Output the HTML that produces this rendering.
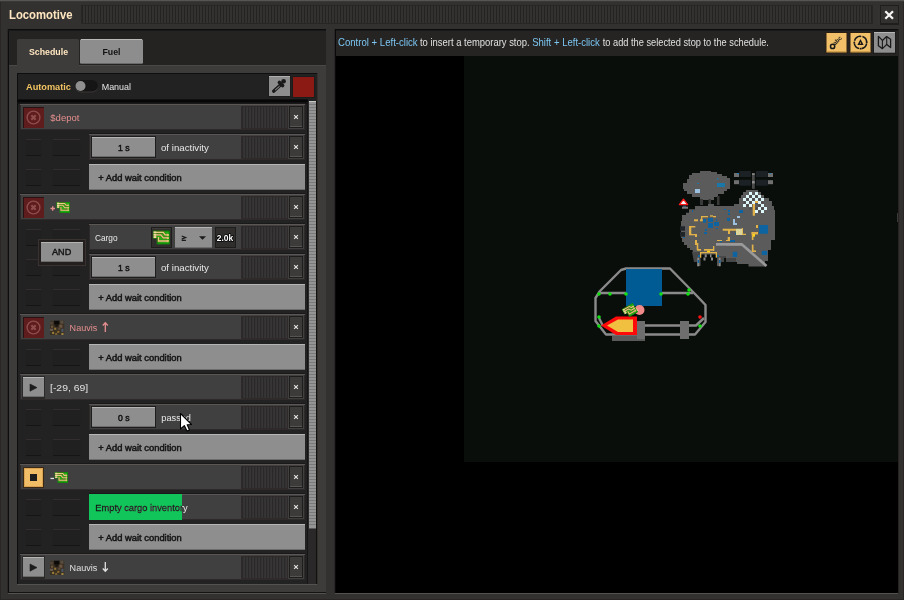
<!DOCTYPE html><html><head><meta charset="utf-8"><style>html,body{margin:0;padding:0;background:#323130;overflow:hidden}svg{display:block;will-change:transform;font-family:"Liberation Sans",sans-serif}</style></head><body>
<svg width="904" height="600" viewBox="0 0 904 600">
<defs>
<symbol id="circ" viewBox="0 0 17 14">
<path d="M0 0H17V14H4V8H0Z" fill="#1fb414"/>
<path d="M1 0.6H16.4V13.4H4.6V7.4H0.6V0.6Z" fill="none" stroke="#0c6e08" stroke-width="0.8"/>
<path d="M1 1.9H10.5L12.2 4.3H15.5 M1 4.3H8L10.5 7.4H15.5 M1 6.6H3.6 M5.7 6.4V10.5H15" fill="none" stroke="#5a6a14" stroke-width="2.3"/>
<path d="M1 1.9H10.5L12.2 4.3H15.5 M1 4.3H8L10.5 7.4H15.5 M1 6.6H3.6 M5.7 6.4V10.5H15" fill="none" stroke="#e6cc86" stroke-width="1.3"/>
<rect x="0.8" y="1" width="2.6" height="1.8" fill="#f0dca0"/><rect x="0.8" y="3.4" width="2.6" height="1.8" fill="#f0dca0"/><rect x="0.8" y="5.7" width="2.6" height="1.8" fill="#f0dca0"/>
<circle cx="15" cy="4.4" r="1.2" fill="#e0c070"/><circle cx="15" cy="7.4" r="1.2" fill="#e0c070"/><circle cx="15" cy="10.5" r="1.2" fill="#e0c070"/>
</symbol>
<symbol id="planet" viewBox="0 0 14 14">
<rect width="14" height="14" fill="#3b3024"/>
<rect x="4" y="0" width="5" height="4" fill="#0c0a08"/><rect x="5" y="4" width="3" height="2" fill="#1a1510"/>
<rect x="0" y="1" width="3" height="3" fill="#4e4236"/><rect x="10" y="0" width="3" height="3" fill="#5a4e42"/>
<rect x="1" y="5" width="2" height="2" fill="#6e5a38"/><rect x="9" y="4" width="3" height="3" fill="#6a5440"/>
<rect x="0" y="8" width="3" height="2" fill="#6a5a50"/><rect x="4" y="7" width="2" height="2" fill="#8a7232"/>
<rect x="11" y="8" width="2" height="3" fill="#48586a"/><rect x="2" y="11" width="2" height="2" fill="#9a7e32"/>
<rect x="7" y="10" width="2" height="2" fill="#8a6a28"/><rect x="11" y="12" width="2" height="2" fill="#a08842"/>
<rect x="5" y="12" width="2" height="2" fill="#7a6030"/><rect x="8" y="7" width="2" height="2" fill="#5a4a38"/>
</symbol>
</defs>
<rect x="0" y="0" width="904" height="600" fill="#323130" />
<rect x="0" y="0" width="1" height="600" fill="#292625" />
<rect x="903" y="0" width="1" height="600" fill="#292625" />
<rect x="0" y="599" width="904" height="1" fill="#292625" />
<rect x="0" y="0" width="904" height="1" fill="#575553" />
<rect x="0" y="1" width="904" height="1" fill="#3a3837" />
<text x="9.00" y="19" font-size="13.5" font-weight="bold" fill="#ffe6c0" textLength="63.52" lengthAdjust="spacingAndGlyphs" >Locomotive</text>
<rect x="81" y="5" width="792" height="19" fill="#282625" />
<rect x="82" y="6" width="790" height="17" fill="#343231" />
<rect x="82" y="6" width="1" height="17" fill="#242322" />
<rect x="85" y="6" width="1" height="17" fill="#242322" />
<rect x="88" y="6" width="1" height="17" fill="#242322" />
<rect x="91" y="6" width="1" height="17" fill="#242322" />
<rect x="94" y="6" width="1" height="17" fill="#242322" />
<rect x="97" y="6" width="1" height="17" fill="#242322" />
<rect x="100" y="6" width="1" height="17" fill="#242322" />
<rect x="103" y="6" width="1" height="17" fill="#242322" />
<rect x="106" y="6" width="1" height="17" fill="#242322" />
<rect x="109" y="6" width="1" height="17" fill="#242322" />
<rect x="112" y="6" width="1" height="17" fill="#242322" />
<rect x="115" y="6" width="1" height="17" fill="#242322" />
<rect x="118" y="6" width="1" height="17" fill="#242322" />
<rect x="121" y="6" width="1" height="17" fill="#242322" />
<rect x="124" y="6" width="1" height="17" fill="#242322" />
<rect x="127" y="6" width="1" height="17" fill="#242322" />
<rect x="130" y="6" width="1" height="17" fill="#242322" />
<rect x="133" y="6" width="1" height="17" fill="#242322" />
<rect x="136" y="6" width="1" height="17" fill="#242322" />
<rect x="139" y="6" width="1" height="17" fill="#242322" />
<rect x="142" y="6" width="1" height="17" fill="#242322" />
<rect x="145" y="6" width="1" height="17" fill="#242322" />
<rect x="148" y="6" width="1" height="17" fill="#242322" />
<rect x="151" y="6" width="1" height="17" fill="#242322" />
<rect x="154" y="6" width="1" height="17" fill="#242322" />
<rect x="157" y="6" width="1" height="17" fill="#242322" />
<rect x="160" y="6" width="1" height="17" fill="#242322" />
<rect x="163" y="6" width="1" height="17" fill="#242322" />
<rect x="166" y="6" width="1" height="17" fill="#242322" />
<rect x="169" y="6" width="1" height="17" fill="#242322" />
<rect x="172" y="6" width="1" height="17" fill="#242322" />
<rect x="175" y="6" width="1" height="17" fill="#242322" />
<rect x="178" y="6" width="1" height="17" fill="#242322" />
<rect x="181" y="6" width="1" height="17" fill="#242322" />
<rect x="184" y="6" width="1" height="17" fill="#242322" />
<rect x="187" y="6" width="1" height="17" fill="#242322" />
<rect x="190" y="6" width="1" height="17" fill="#242322" />
<rect x="193" y="6" width="1" height="17" fill="#242322" />
<rect x="196" y="6" width="1" height="17" fill="#242322" />
<rect x="199" y="6" width="1" height="17" fill="#242322" />
<rect x="202" y="6" width="1" height="17" fill="#242322" />
<rect x="205" y="6" width="1" height="17" fill="#242322" />
<rect x="208" y="6" width="1" height="17" fill="#242322" />
<rect x="211" y="6" width="1" height="17" fill="#242322" />
<rect x="214" y="6" width="1" height="17" fill="#242322" />
<rect x="217" y="6" width="1" height="17" fill="#242322" />
<rect x="220" y="6" width="1" height="17" fill="#242322" />
<rect x="223" y="6" width="1" height="17" fill="#242322" />
<rect x="226" y="6" width="1" height="17" fill="#242322" />
<rect x="229" y="6" width="1" height="17" fill="#242322" />
<rect x="232" y="6" width="1" height="17" fill="#242322" />
<rect x="235" y="6" width="1" height="17" fill="#242322" />
<rect x="238" y="6" width="1" height="17" fill="#242322" />
<rect x="241" y="6" width="1" height="17" fill="#242322" />
<rect x="244" y="6" width="1" height="17" fill="#242322" />
<rect x="247" y="6" width="1" height="17" fill="#242322" />
<rect x="250" y="6" width="1" height="17" fill="#242322" />
<rect x="253" y="6" width="1" height="17" fill="#242322" />
<rect x="256" y="6" width="1" height="17" fill="#242322" />
<rect x="259" y="6" width="1" height="17" fill="#242322" />
<rect x="262" y="6" width="1" height="17" fill="#242322" />
<rect x="265" y="6" width="1" height="17" fill="#242322" />
<rect x="268" y="6" width="1" height="17" fill="#242322" />
<rect x="271" y="6" width="1" height="17" fill="#242322" />
<rect x="274" y="6" width="1" height="17" fill="#242322" />
<rect x="277" y="6" width="1" height="17" fill="#242322" />
<rect x="280" y="6" width="1" height="17" fill="#242322" />
<rect x="283" y="6" width="1" height="17" fill="#242322" />
<rect x="286" y="6" width="1" height="17" fill="#242322" />
<rect x="289" y="6" width="1" height="17" fill="#242322" />
<rect x="292" y="6" width="1" height="17" fill="#242322" />
<rect x="295" y="6" width="1" height="17" fill="#242322" />
<rect x="298" y="6" width="1" height="17" fill="#242322" />
<rect x="301" y="6" width="1" height="17" fill="#242322" />
<rect x="304" y="6" width="1" height="17" fill="#242322" />
<rect x="307" y="6" width="1" height="17" fill="#242322" />
<rect x="310" y="6" width="1" height="17" fill="#242322" />
<rect x="313" y="6" width="1" height="17" fill="#242322" />
<rect x="316" y="6" width="1" height="17" fill="#242322" />
<rect x="319" y="6" width="1" height="17" fill="#242322" />
<rect x="322" y="6" width="1" height="17" fill="#242322" />
<rect x="325" y="6" width="1" height="17" fill="#242322" />
<rect x="328" y="6" width="1" height="17" fill="#242322" />
<rect x="331" y="6" width="1" height="17" fill="#242322" />
<rect x="334" y="6" width="1" height="17" fill="#242322" />
<rect x="337" y="6" width="1" height="17" fill="#242322" />
<rect x="340" y="6" width="1" height="17" fill="#242322" />
<rect x="343" y="6" width="1" height="17" fill="#242322" />
<rect x="346" y="6" width="1" height="17" fill="#242322" />
<rect x="349" y="6" width="1" height="17" fill="#242322" />
<rect x="352" y="6" width="1" height="17" fill="#242322" />
<rect x="355" y="6" width="1" height="17" fill="#242322" />
<rect x="358" y="6" width="1" height="17" fill="#242322" />
<rect x="361" y="6" width="1" height="17" fill="#242322" />
<rect x="364" y="6" width="1" height="17" fill="#242322" />
<rect x="367" y="6" width="1" height="17" fill="#242322" />
<rect x="370" y="6" width="1" height="17" fill="#242322" />
<rect x="373" y="6" width="1" height="17" fill="#242322" />
<rect x="376" y="6" width="1" height="17" fill="#242322" />
<rect x="379" y="6" width="1" height="17" fill="#242322" />
<rect x="382" y="6" width="1" height="17" fill="#242322" />
<rect x="385" y="6" width="1" height="17" fill="#242322" />
<rect x="388" y="6" width="1" height="17" fill="#242322" />
<rect x="391" y="6" width="1" height="17" fill="#242322" />
<rect x="394" y="6" width="1" height="17" fill="#242322" />
<rect x="397" y="6" width="1" height="17" fill="#242322" />
<rect x="400" y="6" width="1" height="17" fill="#242322" />
<rect x="403" y="6" width="1" height="17" fill="#242322" />
<rect x="406" y="6" width="1" height="17" fill="#242322" />
<rect x="409" y="6" width="1" height="17" fill="#242322" />
<rect x="412" y="6" width="1" height="17" fill="#242322" />
<rect x="415" y="6" width="1" height="17" fill="#242322" />
<rect x="418" y="6" width="1" height="17" fill="#242322" />
<rect x="421" y="6" width="1" height="17" fill="#242322" />
<rect x="424" y="6" width="1" height="17" fill="#242322" />
<rect x="427" y="6" width="1" height="17" fill="#242322" />
<rect x="430" y="6" width="1" height="17" fill="#242322" />
<rect x="433" y="6" width="1" height="17" fill="#242322" />
<rect x="436" y="6" width="1" height="17" fill="#242322" />
<rect x="439" y="6" width="1" height="17" fill="#242322" />
<rect x="442" y="6" width="1" height="17" fill="#242322" />
<rect x="445" y="6" width="1" height="17" fill="#242322" />
<rect x="448" y="6" width="1" height="17" fill="#242322" />
<rect x="451" y="6" width="1" height="17" fill="#242322" />
<rect x="454" y="6" width="1" height="17" fill="#242322" />
<rect x="457" y="6" width="1" height="17" fill="#242322" />
<rect x="460" y="6" width="1" height="17" fill="#242322" />
<rect x="463" y="6" width="1" height="17" fill="#242322" />
<rect x="466" y="6" width="1" height="17" fill="#242322" />
<rect x="469" y="6" width="1" height="17" fill="#242322" />
<rect x="472" y="6" width="1" height="17" fill="#242322" />
<rect x="475" y="6" width="1" height="17" fill="#242322" />
<rect x="478" y="6" width="1" height="17" fill="#242322" />
<rect x="481" y="6" width="1" height="17" fill="#242322" />
<rect x="484" y="6" width="1" height="17" fill="#242322" />
<rect x="487" y="6" width="1" height="17" fill="#242322" />
<rect x="490" y="6" width="1" height="17" fill="#242322" />
<rect x="493" y="6" width="1" height="17" fill="#242322" />
<rect x="496" y="6" width="1" height="17" fill="#242322" />
<rect x="499" y="6" width="1" height="17" fill="#242322" />
<rect x="502" y="6" width="1" height="17" fill="#242322" />
<rect x="505" y="6" width="1" height="17" fill="#242322" />
<rect x="508" y="6" width="1" height="17" fill="#242322" />
<rect x="511" y="6" width="1" height="17" fill="#242322" />
<rect x="514" y="6" width="1" height="17" fill="#242322" />
<rect x="517" y="6" width="1" height="17" fill="#242322" />
<rect x="520" y="6" width="1" height="17" fill="#242322" />
<rect x="523" y="6" width="1" height="17" fill="#242322" />
<rect x="526" y="6" width="1" height="17" fill="#242322" />
<rect x="529" y="6" width="1" height="17" fill="#242322" />
<rect x="532" y="6" width="1" height="17" fill="#242322" />
<rect x="535" y="6" width="1" height="17" fill="#242322" />
<rect x="538" y="6" width="1" height="17" fill="#242322" />
<rect x="541" y="6" width="1" height="17" fill="#242322" />
<rect x="544" y="6" width="1" height="17" fill="#242322" />
<rect x="547" y="6" width="1" height="17" fill="#242322" />
<rect x="550" y="6" width="1" height="17" fill="#242322" />
<rect x="553" y="6" width="1" height="17" fill="#242322" />
<rect x="556" y="6" width="1" height="17" fill="#242322" />
<rect x="559" y="6" width="1" height="17" fill="#242322" />
<rect x="562" y="6" width="1" height="17" fill="#242322" />
<rect x="565" y="6" width="1" height="17" fill="#242322" />
<rect x="568" y="6" width="1" height="17" fill="#242322" />
<rect x="571" y="6" width="1" height="17" fill="#242322" />
<rect x="574" y="6" width="1" height="17" fill="#242322" />
<rect x="577" y="6" width="1" height="17" fill="#242322" />
<rect x="580" y="6" width="1" height="17" fill="#242322" />
<rect x="583" y="6" width="1" height="17" fill="#242322" />
<rect x="586" y="6" width="1" height="17" fill="#242322" />
<rect x="589" y="6" width="1" height="17" fill="#242322" />
<rect x="592" y="6" width="1" height="17" fill="#242322" />
<rect x="595" y="6" width="1" height="17" fill="#242322" />
<rect x="598" y="6" width="1" height="17" fill="#242322" />
<rect x="601" y="6" width="1" height="17" fill="#242322" />
<rect x="604" y="6" width="1" height="17" fill="#242322" />
<rect x="607" y="6" width="1" height="17" fill="#242322" />
<rect x="610" y="6" width="1" height="17" fill="#242322" />
<rect x="613" y="6" width="1" height="17" fill="#242322" />
<rect x="616" y="6" width="1" height="17" fill="#242322" />
<rect x="619" y="6" width="1" height="17" fill="#242322" />
<rect x="622" y="6" width="1" height="17" fill="#242322" />
<rect x="625" y="6" width="1" height="17" fill="#242322" />
<rect x="628" y="6" width="1" height="17" fill="#242322" />
<rect x="631" y="6" width="1" height="17" fill="#242322" />
<rect x="634" y="6" width="1" height="17" fill="#242322" />
<rect x="637" y="6" width="1" height="17" fill="#242322" />
<rect x="640" y="6" width="1" height="17" fill="#242322" />
<rect x="643" y="6" width="1" height="17" fill="#242322" />
<rect x="646" y="6" width="1" height="17" fill="#242322" />
<rect x="649" y="6" width="1" height="17" fill="#242322" />
<rect x="652" y="6" width="1" height="17" fill="#242322" />
<rect x="655" y="6" width="1" height="17" fill="#242322" />
<rect x="658" y="6" width="1" height="17" fill="#242322" />
<rect x="661" y="6" width="1" height="17" fill="#242322" />
<rect x="664" y="6" width="1" height="17" fill="#242322" />
<rect x="667" y="6" width="1" height="17" fill="#242322" />
<rect x="670" y="6" width="1" height="17" fill="#242322" />
<rect x="673" y="6" width="1" height="17" fill="#242322" />
<rect x="676" y="6" width="1" height="17" fill="#242322" />
<rect x="679" y="6" width="1" height="17" fill="#242322" />
<rect x="682" y="6" width="1" height="17" fill="#242322" />
<rect x="685" y="6" width="1" height="17" fill="#242322" />
<rect x="688" y="6" width="1" height="17" fill="#242322" />
<rect x="691" y="6" width="1" height="17" fill="#242322" />
<rect x="694" y="6" width="1" height="17" fill="#242322" />
<rect x="697" y="6" width="1" height="17" fill="#242322" />
<rect x="700" y="6" width="1" height="17" fill="#242322" />
<rect x="703" y="6" width="1" height="17" fill="#242322" />
<rect x="706" y="6" width="1" height="17" fill="#242322" />
<rect x="709" y="6" width="1" height="17" fill="#242322" />
<rect x="712" y="6" width="1" height="17" fill="#242322" />
<rect x="715" y="6" width="1" height="17" fill="#242322" />
<rect x="718" y="6" width="1" height="17" fill="#242322" />
<rect x="721" y="6" width="1" height="17" fill="#242322" />
<rect x="724" y="6" width="1" height="17" fill="#242322" />
<rect x="727" y="6" width="1" height="17" fill="#242322" />
<rect x="730" y="6" width="1" height="17" fill="#242322" />
<rect x="733" y="6" width="1" height="17" fill="#242322" />
<rect x="736" y="6" width="1" height="17" fill="#242322" />
<rect x="739" y="6" width="1" height="17" fill="#242322" />
<rect x="742" y="6" width="1" height="17" fill="#242322" />
<rect x="745" y="6" width="1" height="17" fill="#242322" />
<rect x="748" y="6" width="1" height="17" fill="#242322" />
<rect x="751" y="6" width="1" height="17" fill="#242322" />
<rect x="754" y="6" width="1" height="17" fill="#242322" />
<rect x="757" y="6" width="1" height="17" fill="#242322" />
<rect x="760" y="6" width="1" height="17" fill="#242322" />
<rect x="763" y="6" width="1" height="17" fill="#242322" />
<rect x="766" y="6" width="1" height="17" fill="#242322" />
<rect x="769" y="6" width="1" height="17" fill="#242322" />
<rect x="772" y="6" width="1" height="17" fill="#242322" />
<rect x="775" y="6" width="1" height="17" fill="#242322" />
<rect x="778" y="6" width="1" height="17" fill="#242322" />
<rect x="781" y="6" width="1" height="17" fill="#242322" />
<rect x="784" y="6" width="1" height="17" fill="#242322" />
<rect x="787" y="6" width="1" height="17" fill="#242322" />
<rect x="790" y="6" width="1" height="17" fill="#242322" />
<rect x="793" y="6" width="1" height="17" fill="#242322" />
<rect x="796" y="6" width="1" height="17" fill="#242322" />
<rect x="799" y="6" width="1" height="17" fill="#242322" />
<rect x="802" y="6" width="1" height="17" fill="#242322" />
<rect x="805" y="6" width="1" height="17" fill="#242322" />
<rect x="808" y="6" width="1" height="17" fill="#242322" />
<rect x="811" y="6" width="1" height="17" fill="#242322" />
<rect x="814" y="6" width="1" height="17" fill="#242322" />
<rect x="817" y="6" width="1" height="17" fill="#242322" />
<rect x="820" y="6" width="1" height="17" fill="#242322" />
<rect x="823" y="6" width="1" height="17" fill="#242322" />
<rect x="826" y="6" width="1" height="17" fill="#242322" />
<rect x="829" y="6" width="1" height="17" fill="#242322" />
<rect x="832" y="6" width="1" height="17" fill="#242322" />
<rect x="835" y="6" width="1" height="17" fill="#242322" />
<rect x="838" y="6" width="1" height="17" fill="#242322" />
<rect x="841" y="6" width="1" height="17" fill="#242322" />
<rect x="844" y="6" width="1" height="17" fill="#242322" />
<rect x="847" y="6" width="1" height="17" fill="#242322" />
<rect x="850" y="6" width="1" height="17" fill="#242322" />
<rect x="853" y="6" width="1" height="17" fill="#242322" />
<rect x="856" y="6" width="1" height="17" fill="#242322" />
<rect x="859" y="6" width="1" height="17" fill="#242322" />
<rect x="862" y="6" width="1" height="17" fill="#242322" />
<rect x="865" y="6" width="1" height="17" fill="#242322" />
<rect x="868" y="6" width="1" height="17" fill="#242322" />
<rect x="871" y="6" width="1" height="17" fill="#242322" />
<rect x="880" y="5" width="19" height="20" fill="#1f1e1d" />
<rect x="881" y="6" width="17" height="17" fill="#33312f" />
<path d="M885.3 11.2 L893 18.8 M893 11.2 L885.3 18.8" stroke="#f4f4f4" stroke-width="2.3" stroke-linecap="butt"/>
<rect x="8" y="29" width="318" height="564" fill="#0e0d0d" />
<rect x="7" y="29" width="1" height="564" fill="#2a2625" />
<rect x="9" y="29" width="317" height="36" fill="#242322" />
<rect x="8" y="29" width="318" height="1" fill="#0d0c0c" />
<rect x="8" y="30" width="318" height="1" fill="#1a1919" />
<rect x="17" y="39" width="62" height="27" fill="#3d3c3b"  rx="1.5"/>
<rect x="17" y="45" width="62" height="21" fill="#3d3c3b" />
<text x="29.00" y="55" font-size="9" font-weight="bold" fill="#ffe6c0" textLength="39.01" lengthAdjust="spacingAndGlyphs" >Schedule</text>
<rect x="80" y="39" width="63" height="25" fill="#6a6a6a"  rx="1.5"/>
<rect x="80" y="40" width="63" height="23" fill="#8d8d8d" />
<rect x="81" y="39" width="61" height="1" fill="#b9b9b9" />
<text x="102.50" y="55" font-size="9" font-weight="bold" fill="#111111" textLength="18.01" lengthAdjust="spacingAndGlyphs" >Fuel</text>
<rect x="9" y="65" width="317" height="527" fill="#3d3c3b" />
<rect x="9" y="65" width="8" height="1" fill="#4a4847" />
<rect x="79" y="65" width="247" height="1" fill="#4a4847" />
<rect x="17" y="73" width="300" height="511" fill="#232222" />
<rect x="17" y="73" width="300" height="1" fill="#0e0e0e" />
<rect x="17" y="73" width="1" height="511" fill="#0e0e0e" />
<rect x="17" y="584" width="300" height="1" fill="#55514f" />
<rect x="9" y="592" width="317" height="1" fill="#141313" />
<rect x="8" y="593" width="318" height="1" fill="#55514f" />
<rect x="317" y="73" width="1" height="511" fill="#36302d" />
<text x="26.00" y="90" font-size="9" font-weight="bold" fill="#f2c462" textLength="44.99" lengthAdjust="spacingAndGlyphs" >Automatic</text>
<rect x="75" y="80.5" width="23" height="12" fill="#3a3837"  rx="6"/>
<rect x="75" y="80" width="23" height="11.5" fill="#161515"  rx="6"/>
<circle cx="80.5" cy="86" r="5" fill="#8f8f8f"/>
<text x="101.70" y="90" font-size="9.6" font-weight="normal" fill="#e6e6e6" textLength="29.30" lengthAdjust="spacingAndGlyphs" >Manual</text>
<rect x="268" y="75" width="23" height="22" fill="#1d1c1c" />
<rect x="269" y="76" width="21" height="20" fill="#8d8d8d" />
<rect x="269" y="76" width="21" height="1" fill="#b0b0b0" />
<path d="M281 84.5L273.6 91.2" stroke="#1a1a1a" stroke-width="3.2" stroke-linecap="round"/><path d="M279.6 86.2L275.2 90" stroke="#a0a0a0" stroke-width="1"/><path d="M279.4 82.4L282.6 85.6" stroke="#1a1a1a" stroke-width="3.6" stroke-linecap="round"/><circle cx="283.6" cy="81.3" r="2.3" fill="#1a1a1a"/>
<rect x="292" y="76" width="23" height="22" fill="#1d1c1c" />
<rect x="293" y="77" width="21" height="20" fill="#8b1a14" />
<rect x="17" y="99" width="291" height="5" fill="#121111" />
<rect x="17" y="100" width="291" height="2" fill="#070707" />
<rect x="20" y="103" width="285" height="1" fill="#1a1919" />
<rect x="20" y="104" width="285" height="26" fill="#2e2a29" />
<rect x="21" y="105" width="283" height="24" fill="#414040" />
<rect x="20" y="104" width="285" height="1" fill="#5b5654" />
<rect x="241" y="106" width="47" height="23" fill="#2f2a29" />
<rect x="242" y="107" width="45" height="21" fill="#2a2828" />
<rect x="243.5" y="107" width="1.2" height="21" fill="#3e3c3c" />
<rect x="246.5" y="107" width="1.2" height="21" fill="#3e3c3c" />
<rect x="249.5" y="107" width="1.2" height="21" fill="#3e3c3c" />
<rect x="252.5" y="107" width="1.2" height="21" fill="#3e3c3c" />
<rect x="255.5" y="107" width="1.2" height="21" fill="#3e3c3c" />
<rect x="258.5" y="107" width="1.2" height="21" fill="#3e3c3c" />
<rect x="261.5" y="107" width="1.2" height="21" fill="#3e3c3c" />
<rect x="264.5" y="107" width="1.2" height="21" fill="#3e3c3c" />
<rect x="267.5" y="107" width="1.2" height="21" fill="#3e3c3c" />
<rect x="270.5" y="107" width="1.2" height="21" fill="#3e3c3c" />
<rect x="273.5" y="107" width="1.2" height="21" fill="#3e3c3c" />
<rect x="276.5" y="107" width="1.2" height="21" fill="#3e3c3c" />
<rect x="279.5" y="107" width="1.2" height="21" fill="#3e3c3c" />
<rect x="282.5" y="107" width="1.2" height="21" fill="#3e3c3c" />
<rect x="285.5" y="107" width="1.2" height="21" fill="#3e3c3c" />
<rect x="289" y="106" width="14" height="22" fill="#1e1d1c" />
<rect x="290" y="107" width="12" height="20" fill="#3c3b3a" />
<rect x="290" y="126" width="12" height="1" fill="#575553" />
<path d="M294.1 115.1 L297.9 118.9 M297.9 115.1 L294.1 118.9" stroke="#e0e0e0" stroke-width="1.15"/>
<rect x="23" y="107" width="21" height="21" fill="#2a1212" />
<rect x="24" y="108" width="20" height="20" fill="#5e1c1c" />
<circle cx="33.5" cy="117.5" r="6.4" fill="none" stroke="#8e4c4a" stroke-width="1.4"/>
<path d="M31.3 115.3 L35.7 119.7 M35.7 115.3 L31.3 119.7" stroke="#8e4c4a" stroke-width="2.2"/>
<text x="50.30" y="121" font-size="9.6" font-weight="normal" fill="#e58e8e" textLength="29.19" lengthAdjust="spacingAndGlyphs" >$depot</text>
<rect x="25.5" y="139" width="16.0" height="17" fill="#212020" />
<rect x="26.0" y="139" width="15.0" height="1" fill="#322e2d" />
<rect x="26.0" y="155" width="15.0" height="1" fill="#161515" />
<rect x="52.5" y="139" width="28.0" height="17" fill="#212020" />
<rect x="53.0" y="139" width="27.0" height="1" fill="#322e2d" />
<rect x="53.0" y="155" width="27.0" height="1" fill="#161515" />
<rect x="89" y="133" width="216" height="1" fill="#1a1919" />
<rect x="89" y="134" width="216" height="26" fill="#2e2a29" />
<rect x="90" y="135" width="214" height="24" fill="#414040" />
<rect x="89" y="134" width="216" height="1" fill="#5b5654" />
<rect x="241" y="136" width="47" height="23" fill="#2f2a29" />
<rect x="242" y="137" width="45" height="21" fill="#2a2828" />
<rect x="243.5" y="137" width="1.2" height="21" fill="#3e3c3c" />
<rect x="246.5" y="137" width="1.2" height="21" fill="#3e3c3c" />
<rect x="249.5" y="137" width="1.2" height="21" fill="#3e3c3c" />
<rect x="252.5" y="137" width="1.2" height="21" fill="#3e3c3c" />
<rect x="255.5" y="137" width="1.2" height="21" fill="#3e3c3c" />
<rect x="258.5" y="137" width="1.2" height="21" fill="#3e3c3c" />
<rect x="261.5" y="137" width="1.2" height="21" fill="#3e3c3c" />
<rect x="264.5" y="137" width="1.2" height="21" fill="#3e3c3c" />
<rect x="267.5" y="137" width="1.2" height="21" fill="#3e3c3c" />
<rect x="270.5" y="137" width="1.2" height="21" fill="#3e3c3c" />
<rect x="273.5" y="137" width="1.2" height="21" fill="#3e3c3c" />
<rect x="276.5" y="137" width="1.2" height="21" fill="#3e3c3c" />
<rect x="279.5" y="137" width="1.2" height="21" fill="#3e3c3c" />
<rect x="282.5" y="137" width="1.2" height="21" fill="#3e3c3c" />
<rect x="285.5" y="137" width="1.2" height="21" fill="#3e3c3c" />
<rect x="289" y="136" width="14" height="22" fill="#1e1d1c" />
<rect x="290" y="137" width="12" height="20" fill="#3c3b3a" />
<rect x="290" y="156" width="12" height="1" fill="#575553" />
<path d="M294.1 145.1 L297.9 148.9 M297.9 145.1 L294.1 148.9" stroke="#e0e0e0" stroke-width="1.15"/>
<rect x="91" y="136" width="65" height="22" fill="#1e1d1c" />
<rect x="92" y="137" width="63" height="20" fill="#8e8e8e" />
<rect x="92" y="137" width="63" height="1" fill="#b5b5b5" />
<rect x="92" y="156" width="63" height="1" fill="#6c6c6c" />
<text x="118.00" y="151" font-size="9.2" font-weight="normal" fill="#111111" textLength="11.59" lengthAdjust="spacingAndGlyphs" stroke="#111" stroke-width="0.45">1 s</text>
<text x="161.00" y="151" font-size="9.6" font-weight="normal" fill="#e8e8e8" textLength="47.81" lengthAdjust="spacingAndGlyphs" >of inactivity</text>
<rect x="25.5" y="169" width="16.0" height="17" fill="#212020" />
<rect x="26.0" y="169" width="15.0" height="1" fill="#322e2d" />
<rect x="26.0" y="185" width="15.0" height="1" fill="#161515" />
<rect x="52.5" y="169" width="28.0" height="17" fill="#212020" />
<rect x="53.0" y="169" width="27.0" height="1" fill="#322e2d" />
<rect x="53.0" y="185" width="27.0" height="1" fill="#161515" />
<rect x="89" y="164" width="216" height="26" fill="#8e8e8e" />
<rect x="89" y="164" width="216" height="1" fill="#b5b5b5" />
<rect x="89" y="189" width="216" height="1" fill="#6c6c6c" />
<text x="98.30" y="181" font-size="9.1" font-weight="normal" fill="#161616" textLength="83.48" lengthAdjust="spacingAndGlyphs" stroke="#161616" stroke-width="0.5">+ Add wait condition</text>
<rect x="20" y="193" width="285" height="1" fill="#1a1919" />
<rect x="20" y="194" width="285" height="26" fill="#2e2a29" />
<rect x="21" y="195" width="283" height="24" fill="#414040" />
<rect x="20" y="194" width="285" height="1" fill="#5b5654" />
<rect x="241" y="196" width="47" height="23" fill="#2f2a29" />
<rect x="242" y="197" width="45" height="21" fill="#2a2828" />
<rect x="243.5" y="197" width="1.2" height="21" fill="#3e3c3c" />
<rect x="246.5" y="197" width="1.2" height="21" fill="#3e3c3c" />
<rect x="249.5" y="197" width="1.2" height="21" fill="#3e3c3c" />
<rect x="252.5" y="197" width="1.2" height="21" fill="#3e3c3c" />
<rect x="255.5" y="197" width="1.2" height="21" fill="#3e3c3c" />
<rect x="258.5" y="197" width="1.2" height="21" fill="#3e3c3c" />
<rect x="261.5" y="197" width="1.2" height="21" fill="#3e3c3c" />
<rect x="264.5" y="197" width="1.2" height="21" fill="#3e3c3c" />
<rect x="267.5" y="197" width="1.2" height="21" fill="#3e3c3c" />
<rect x="270.5" y="197" width="1.2" height="21" fill="#3e3c3c" />
<rect x="273.5" y="197" width="1.2" height="21" fill="#3e3c3c" />
<rect x="276.5" y="197" width="1.2" height="21" fill="#3e3c3c" />
<rect x="279.5" y="197" width="1.2" height="21" fill="#3e3c3c" />
<rect x="282.5" y="197" width="1.2" height="21" fill="#3e3c3c" />
<rect x="285.5" y="197" width="1.2" height="21" fill="#3e3c3c" />
<rect x="289" y="196" width="14" height="22" fill="#1e1d1c" />
<rect x="290" y="197" width="12" height="20" fill="#3c3b3a" />
<rect x="290" y="216" width="12" height="1" fill="#575553" />
<path d="M294.1 205.1 L297.9 208.9 M297.9 205.1 L294.1 208.9" stroke="#e0e0e0" stroke-width="1.15"/>
<rect x="23" y="197" width="21" height="21" fill="#2a1212" />
<rect x="24" y="198" width="20" height="20" fill="#5e1c1c" />
<circle cx="33.5" cy="207.5" r="6.4" fill="none" stroke="#8e4c4a" stroke-width="1.4"/>
<path d="M31.3 205.3 L35.7 209.7 M35.7 205.3 L31.3 209.7" stroke="#8e4c4a" stroke-width="2.2"/>
<rect x="25.5" y="259" width="16.0" height="17" fill="#212020" />
<rect x="26.0" y="259" width="15.0" height="1" fill="#322e2d" />
<rect x="26.0" y="275" width="15.0" height="1" fill="#161515" />
<rect x="52.5" y="259" width="28.0" height="17" fill="#212020" />
<rect x="53.0" y="259" width="27.0" height="1" fill="#322e2d" />
<rect x="53.0" y="275" width="27.0" height="1" fill="#161515" />
<rect x="89" y="253" width="216" height="1" fill="#1a1919" />
<rect x="89" y="254" width="216" height="26" fill="#2e2a29" />
<rect x="90" y="255" width="214" height="24" fill="#414040" />
<rect x="89" y="254" width="216" height="1" fill="#5b5654" />
<rect x="241" y="256" width="47" height="23" fill="#2f2a29" />
<rect x="242" y="257" width="45" height="21" fill="#2a2828" />
<rect x="243.5" y="257" width="1.2" height="21" fill="#3e3c3c" />
<rect x="246.5" y="257" width="1.2" height="21" fill="#3e3c3c" />
<rect x="249.5" y="257" width="1.2" height="21" fill="#3e3c3c" />
<rect x="252.5" y="257" width="1.2" height="21" fill="#3e3c3c" />
<rect x="255.5" y="257" width="1.2" height="21" fill="#3e3c3c" />
<rect x="258.5" y="257" width="1.2" height="21" fill="#3e3c3c" />
<rect x="261.5" y="257" width="1.2" height="21" fill="#3e3c3c" />
<rect x="264.5" y="257" width="1.2" height="21" fill="#3e3c3c" />
<rect x="267.5" y="257" width="1.2" height="21" fill="#3e3c3c" />
<rect x="270.5" y="257" width="1.2" height="21" fill="#3e3c3c" />
<rect x="273.5" y="257" width="1.2" height="21" fill="#3e3c3c" />
<rect x="276.5" y="257" width="1.2" height="21" fill="#3e3c3c" />
<rect x="279.5" y="257" width="1.2" height="21" fill="#3e3c3c" />
<rect x="282.5" y="257" width="1.2" height="21" fill="#3e3c3c" />
<rect x="285.5" y="257" width="1.2" height="21" fill="#3e3c3c" />
<rect x="289" y="256" width="14" height="22" fill="#1e1d1c" />
<rect x="290" y="257" width="12" height="20" fill="#3c3b3a" />
<rect x="290" y="276" width="12" height="1" fill="#575553" />
<path d="M294.1 265.1 L297.9 268.9 M297.9 265.1 L294.1 268.9" stroke="#e0e0e0" stroke-width="1.15"/>
<rect x="91" y="256" width="65" height="22" fill="#1e1d1c" />
<rect x="92" y="257" width="63" height="20" fill="#8e8e8e" />
<rect x="92" y="257" width="63" height="1" fill="#b5b5b5" />
<rect x="92" y="276" width="63" height="1" fill="#6c6c6c" />
<text x="118.00" y="271" font-size="9.2" font-weight="normal" fill="#111111" textLength="11.59" lengthAdjust="spacingAndGlyphs" stroke="#111" stroke-width="0.45">1 s</text>
<text x="161.00" y="271" font-size="9.6" font-weight="normal" fill="#e8e8e8" textLength="47.81" lengthAdjust="spacingAndGlyphs" >of inactivity</text>
<rect x="25.5" y="289" width="16.0" height="17" fill="#212020" />
<rect x="26.0" y="289" width="15.0" height="1" fill="#322e2d" />
<rect x="26.0" y="305" width="15.0" height="1" fill="#161515" />
<rect x="52.5" y="289" width="28.0" height="17" fill="#212020" />
<rect x="53.0" y="289" width="27.0" height="1" fill="#322e2d" />
<rect x="53.0" y="305" width="27.0" height="1" fill="#161515" />
<rect x="89" y="284" width="216" height="26" fill="#8e8e8e" />
<rect x="89" y="284" width="216" height="1" fill="#b5b5b5" />
<rect x="89" y="309" width="216" height="1" fill="#6c6c6c" />
<text x="98.30" y="301" font-size="9.1" font-weight="normal" fill="#161616" textLength="83.48" lengthAdjust="spacingAndGlyphs" stroke="#161616" stroke-width="0.5">+ Add wait condition</text>
<rect x="20" y="313" width="285" height="1" fill="#1a1919" />
<rect x="20" y="314" width="285" height="26" fill="#2e2a29" />
<rect x="21" y="315" width="283" height="24" fill="#414040" />
<rect x="20" y="314" width="285" height="1" fill="#5b5654" />
<rect x="241" y="316" width="47" height="23" fill="#2f2a29" />
<rect x="242" y="317" width="45" height="21" fill="#2a2828" />
<rect x="243.5" y="317" width="1.2" height="21" fill="#3e3c3c" />
<rect x="246.5" y="317" width="1.2" height="21" fill="#3e3c3c" />
<rect x="249.5" y="317" width="1.2" height="21" fill="#3e3c3c" />
<rect x="252.5" y="317" width="1.2" height="21" fill="#3e3c3c" />
<rect x="255.5" y="317" width="1.2" height="21" fill="#3e3c3c" />
<rect x="258.5" y="317" width="1.2" height="21" fill="#3e3c3c" />
<rect x="261.5" y="317" width="1.2" height="21" fill="#3e3c3c" />
<rect x="264.5" y="317" width="1.2" height="21" fill="#3e3c3c" />
<rect x="267.5" y="317" width="1.2" height="21" fill="#3e3c3c" />
<rect x="270.5" y="317" width="1.2" height="21" fill="#3e3c3c" />
<rect x="273.5" y="317" width="1.2" height="21" fill="#3e3c3c" />
<rect x="276.5" y="317" width="1.2" height="21" fill="#3e3c3c" />
<rect x="279.5" y="317" width="1.2" height="21" fill="#3e3c3c" />
<rect x="282.5" y="317" width="1.2" height="21" fill="#3e3c3c" />
<rect x="285.5" y="317" width="1.2" height="21" fill="#3e3c3c" />
<rect x="289" y="316" width="14" height="22" fill="#1e1d1c" />
<rect x="290" y="317" width="12" height="20" fill="#3c3b3a" />
<rect x="290" y="336" width="12" height="1" fill="#575553" />
<path d="M294.1 325.1 L297.9 328.9 M297.9 325.1 L294.1 328.9" stroke="#e0e0e0" stroke-width="1.15"/>
<rect x="23" y="317" width="21" height="21" fill="#2a1212" />
<rect x="24" y="318" width="20" height="20" fill="#5e1c1c" />
<circle cx="33.5" cy="327.5" r="6.4" fill="none" stroke="#8e4c4a" stroke-width="1.4"/>
<path d="M31.3 325.3 L35.7 329.7 M35.7 325.3 L31.3 329.7" stroke="#8e4c4a" stroke-width="2.2"/>
<text x="69.60" y="331" font-size="9.6" font-weight="normal" fill="#e58e8e" textLength="27.72" lengthAdjust="spacingAndGlyphs" >Nauvis</text>
<path d="M105.3 323V332 M102.8 325.5L105.3 322.8L107.8 325.5" fill="none" stroke="#e58e8e" stroke-width="1.3"/>
<rect x="25.5" y="349" width="16.0" height="17" fill="#212020" />
<rect x="26.0" y="349" width="15.0" height="1" fill="#322e2d" />
<rect x="26.0" y="365" width="15.0" height="1" fill="#161515" />
<rect x="52.5" y="349" width="28.0" height="17" fill="#212020" />
<rect x="53.0" y="349" width="27.0" height="1" fill="#322e2d" />
<rect x="53.0" y="365" width="27.0" height="1" fill="#161515" />
<rect x="89" y="344" width="216" height="26" fill="#8e8e8e" />
<rect x="89" y="344" width="216" height="1" fill="#b5b5b5" />
<rect x="89" y="369" width="216" height="1" fill="#6c6c6c" />
<text x="98.30" y="361" font-size="9.1" font-weight="normal" fill="#161616" textLength="83.48" lengthAdjust="spacingAndGlyphs" stroke="#161616" stroke-width="0.5">+ Add wait condition</text>
<rect x="20" y="373" width="285" height="1" fill="#1a1919" />
<rect x="20" y="374" width="285" height="26" fill="#2e2a29" />
<rect x="21" y="375" width="283" height="24" fill="#414040" />
<rect x="20" y="374" width="285" height="1" fill="#5b5654" />
<rect x="241" y="376" width="47" height="23" fill="#2f2a29" />
<rect x="242" y="377" width="45" height="21" fill="#2a2828" />
<rect x="243.5" y="377" width="1.2" height="21" fill="#3e3c3c" />
<rect x="246.5" y="377" width="1.2" height="21" fill="#3e3c3c" />
<rect x="249.5" y="377" width="1.2" height="21" fill="#3e3c3c" />
<rect x="252.5" y="377" width="1.2" height="21" fill="#3e3c3c" />
<rect x="255.5" y="377" width="1.2" height="21" fill="#3e3c3c" />
<rect x="258.5" y="377" width="1.2" height="21" fill="#3e3c3c" />
<rect x="261.5" y="377" width="1.2" height="21" fill="#3e3c3c" />
<rect x="264.5" y="377" width="1.2" height="21" fill="#3e3c3c" />
<rect x="267.5" y="377" width="1.2" height="21" fill="#3e3c3c" />
<rect x="270.5" y="377" width="1.2" height="21" fill="#3e3c3c" />
<rect x="273.5" y="377" width="1.2" height="21" fill="#3e3c3c" />
<rect x="276.5" y="377" width="1.2" height="21" fill="#3e3c3c" />
<rect x="279.5" y="377" width="1.2" height="21" fill="#3e3c3c" />
<rect x="282.5" y="377" width="1.2" height="21" fill="#3e3c3c" />
<rect x="285.5" y="377" width="1.2" height="21" fill="#3e3c3c" />
<rect x="289" y="376" width="14" height="22" fill="#1e1d1c" />
<rect x="290" y="377" width="12" height="20" fill="#3c3b3a" />
<rect x="290" y="396" width="12" height="1" fill="#575553" />
<path d="M294.1 385.1 L297.9 388.9 M297.9 385.1 L294.1 388.9" stroke="#e0e0e0" stroke-width="1.15"/>
<rect x="22" y="376" width="23" height="23" fill="#2c2a29" />
<rect x="23" y="377" width="21" height="20" fill="#8e8e8e" />
<rect x="23" y="377" width="21" height="1" fill="#b5b5b5" />
<rect x="23" y="396" width="21" height="1" fill="#6c6c6c" />
<path d="M30 384 L37 387.6 L30 391.2 Z" fill="#1c1c1c" stroke="#1c1c1c" stroke-width="0.6" stroke-linejoin="round"/>
<text x="50.00" y="391" font-size="9.6" font-weight="normal" fill="#e0e0e0" textLength="38.19" lengthAdjust="spacingAndGlyphs" >[-29, 69]</text>
<rect x="25.5" y="409" width="16.0" height="17" fill="#212020" />
<rect x="26.0" y="409" width="15.0" height="1" fill="#322e2d" />
<rect x="26.0" y="425" width="15.0" height="1" fill="#161515" />
<rect x="52.5" y="409" width="28.0" height="17" fill="#212020" />
<rect x="53.0" y="409" width="27.0" height="1" fill="#322e2d" />
<rect x="53.0" y="425" width="27.0" height="1" fill="#161515" />
<rect x="89" y="403" width="216" height="1" fill="#1a1919" />
<rect x="89" y="404" width="216" height="26" fill="#2e2a29" />
<rect x="90" y="405" width="214" height="24" fill="#414040" />
<rect x="89" y="404" width="216" height="1" fill="#5b5654" />
<rect x="241" y="406" width="47" height="23" fill="#2f2a29" />
<rect x="242" y="407" width="45" height="21" fill="#2a2828" />
<rect x="243.5" y="407" width="1.2" height="21" fill="#3e3c3c" />
<rect x="246.5" y="407" width="1.2" height="21" fill="#3e3c3c" />
<rect x="249.5" y="407" width="1.2" height="21" fill="#3e3c3c" />
<rect x="252.5" y="407" width="1.2" height="21" fill="#3e3c3c" />
<rect x="255.5" y="407" width="1.2" height="21" fill="#3e3c3c" />
<rect x="258.5" y="407" width="1.2" height="21" fill="#3e3c3c" />
<rect x="261.5" y="407" width="1.2" height="21" fill="#3e3c3c" />
<rect x="264.5" y="407" width="1.2" height="21" fill="#3e3c3c" />
<rect x="267.5" y="407" width="1.2" height="21" fill="#3e3c3c" />
<rect x="270.5" y="407" width="1.2" height="21" fill="#3e3c3c" />
<rect x="273.5" y="407" width="1.2" height="21" fill="#3e3c3c" />
<rect x="276.5" y="407" width="1.2" height="21" fill="#3e3c3c" />
<rect x="279.5" y="407" width="1.2" height="21" fill="#3e3c3c" />
<rect x="282.5" y="407" width="1.2" height="21" fill="#3e3c3c" />
<rect x="285.5" y="407" width="1.2" height="21" fill="#3e3c3c" />
<rect x="289" y="406" width="14" height="22" fill="#1e1d1c" />
<rect x="290" y="407" width="12" height="20" fill="#3c3b3a" />
<rect x="290" y="426" width="12" height="1" fill="#575553" />
<path d="M294.1 415.1 L297.9 418.9 M297.9 415.1 L294.1 418.9" stroke="#e0e0e0" stroke-width="1.15"/>
<rect x="91" y="406" width="65" height="22" fill="#1e1d1c" />
<rect x="92" y="407" width="63" height="20" fill="#8e8e8e" />
<rect x="92" y="407" width="63" height="1" fill="#b5b5b5" />
<rect x="92" y="426" width="63" height="1" fill="#6c6c6c" />
<text x="118.00" y="421" font-size="9.2" font-weight="normal" fill="#111111" textLength="11.59" lengthAdjust="spacingAndGlyphs" stroke="#111" stroke-width="0.45">0 s</text>
<text x="161.30" y="421" font-size="9.6" font-weight="normal" fill="#e8e8e8" textLength="29.70" lengthAdjust="spacingAndGlyphs" >passed</text>
<rect x="25.5" y="439" width="16.0" height="17" fill="#212020" />
<rect x="26.0" y="439" width="15.0" height="1" fill="#322e2d" />
<rect x="26.0" y="455" width="15.0" height="1" fill="#161515" />
<rect x="52.5" y="439" width="28.0" height="17" fill="#212020" />
<rect x="53.0" y="439" width="27.0" height="1" fill="#322e2d" />
<rect x="53.0" y="455" width="27.0" height="1" fill="#161515" />
<rect x="89" y="434" width="216" height="26" fill="#8e8e8e" />
<rect x="89" y="434" width="216" height="1" fill="#b5b5b5" />
<rect x="89" y="459" width="216" height="1" fill="#6c6c6c" />
<text x="98.30" y="451" font-size="9.1" font-weight="normal" fill="#161616" textLength="83.48" lengthAdjust="spacingAndGlyphs" stroke="#161616" stroke-width="0.5">+ Add wait condition</text>
<rect x="20" y="463" width="285" height="1" fill="#1a1919" />
<rect x="20" y="464" width="285" height="26" fill="#2e2a29" />
<rect x="21" y="465" width="283" height="24" fill="#414040" />
<rect x="20" y="464" width="285" height="1" fill="#5b5654" />
<rect x="241" y="466" width="47" height="23" fill="#2f2a29" />
<rect x="242" y="467" width="45" height="21" fill="#2a2828" />
<rect x="243.5" y="467" width="1.2" height="21" fill="#3e3c3c" />
<rect x="246.5" y="467" width="1.2" height="21" fill="#3e3c3c" />
<rect x="249.5" y="467" width="1.2" height="21" fill="#3e3c3c" />
<rect x="252.5" y="467" width="1.2" height="21" fill="#3e3c3c" />
<rect x="255.5" y="467" width="1.2" height="21" fill="#3e3c3c" />
<rect x="258.5" y="467" width="1.2" height="21" fill="#3e3c3c" />
<rect x="261.5" y="467" width="1.2" height="21" fill="#3e3c3c" />
<rect x="264.5" y="467" width="1.2" height="21" fill="#3e3c3c" />
<rect x="267.5" y="467" width="1.2" height="21" fill="#3e3c3c" />
<rect x="270.5" y="467" width="1.2" height="21" fill="#3e3c3c" />
<rect x="273.5" y="467" width="1.2" height="21" fill="#3e3c3c" />
<rect x="276.5" y="467" width="1.2" height="21" fill="#3e3c3c" />
<rect x="279.5" y="467" width="1.2" height="21" fill="#3e3c3c" />
<rect x="282.5" y="467" width="1.2" height="21" fill="#3e3c3c" />
<rect x="285.5" y="467" width="1.2" height="21" fill="#3e3c3c" />
<rect x="289" y="466" width="14" height="22" fill="#1e1d1c" />
<rect x="290" y="467" width="12" height="20" fill="#3c3b3a" />
<rect x="290" y="486" width="12" height="1" fill="#575553" />
<path d="M294.1 475.1 L297.9 478.9 M297.9 475.1 L294.1 478.9" stroke="#e0e0e0" stroke-width="1.15"/>
<rect x="23" y="467" width="21" height="21" fill="#3a2814" />
<rect x="24" y="468" width="19" height="19" fill="#d9a352" />
<rect x="25" y="469" width="17" height="17" fill="#f1bd66" />
<rect x="30" y="474" width="7" height="7" fill="#1e1e1e" />
<rect x="25.5" y="499" width="16.0" height="17" fill="#212020" />
<rect x="26.0" y="499" width="15.0" height="1" fill="#322e2d" />
<rect x="26.0" y="515" width="15.0" height="1" fill="#161515" />
<rect x="52.5" y="499" width="28.0" height="17" fill="#212020" />
<rect x="53.0" y="499" width="27.0" height="1" fill="#322e2d" />
<rect x="53.0" y="515" width="27.0" height="1" fill="#161515" />
<rect x="89" y="493" width="216" height="1" fill="#1a1919" />
<rect x="89" y="494" width="216" height="26" fill="#2e2a29" />
<rect x="90" y="495" width="214" height="24" fill="#414040" />
<rect x="89" y="494" width="216" height="1" fill="#5b5654" />
<rect x="241" y="496" width="47" height="23" fill="#2f2a29" />
<rect x="242" y="497" width="45" height="21" fill="#2a2828" />
<rect x="243.5" y="497" width="1.2" height="21" fill="#3e3c3c" />
<rect x="246.5" y="497" width="1.2" height="21" fill="#3e3c3c" />
<rect x="249.5" y="497" width="1.2" height="21" fill="#3e3c3c" />
<rect x="252.5" y="497" width="1.2" height="21" fill="#3e3c3c" />
<rect x="255.5" y="497" width="1.2" height="21" fill="#3e3c3c" />
<rect x="258.5" y="497" width="1.2" height="21" fill="#3e3c3c" />
<rect x="261.5" y="497" width="1.2" height="21" fill="#3e3c3c" />
<rect x="264.5" y="497" width="1.2" height="21" fill="#3e3c3c" />
<rect x="267.5" y="497" width="1.2" height="21" fill="#3e3c3c" />
<rect x="270.5" y="497" width="1.2" height="21" fill="#3e3c3c" />
<rect x="273.5" y="497" width="1.2" height="21" fill="#3e3c3c" />
<rect x="276.5" y="497" width="1.2" height="21" fill="#3e3c3c" />
<rect x="279.5" y="497" width="1.2" height="21" fill="#3e3c3c" />
<rect x="282.5" y="497" width="1.2" height="21" fill="#3e3c3c" />
<rect x="285.5" y="497" width="1.2" height="21" fill="#3e3c3c" />
<rect x="289" y="496" width="14" height="22" fill="#1e1d1c" />
<rect x="290" y="497" width="12" height="20" fill="#3c3b3a" />
<rect x="290" y="516" width="12" height="1" fill="#575553" />
<path d="M294.1 505.1 L297.9 508.9 M297.9 505.1 L294.1 508.9" stroke="#e0e0e0" stroke-width="1.15"/>
<rect x="25.5" y="529" width="16.0" height="17" fill="#212020" />
<rect x="26.0" y="529" width="15.0" height="1" fill="#322e2d" />
<rect x="26.0" y="545" width="15.0" height="1" fill="#161515" />
<rect x="52.5" y="529" width="28.0" height="17" fill="#212020" />
<rect x="53.0" y="529" width="27.0" height="1" fill="#322e2d" />
<rect x="53.0" y="545" width="27.0" height="1" fill="#161515" />
<rect x="89" y="524" width="216" height="26" fill="#8e8e8e" />
<rect x="89" y="524" width="216" height="1" fill="#b5b5b5" />
<rect x="89" y="549" width="216" height="1" fill="#6c6c6c" />
<text x="98.30" y="541" font-size="9.1" font-weight="normal" fill="#161616" textLength="83.48" lengthAdjust="spacingAndGlyphs" stroke="#161616" stroke-width="0.5">+ Add wait condition</text>
<rect x="20" y="553" width="285" height="1" fill="#1a1919" />
<rect x="20" y="554" width="285" height="26" fill="#2e2a29" />
<rect x="21" y="555" width="283" height="24" fill="#414040" />
<rect x="20" y="554" width="285" height="1" fill="#5b5654" />
<rect x="241" y="556" width="47" height="23" fill="#2f2a29" />
<rect x="242" y="557" width="45" height="21" fill="#2a2828" />
<rect x="243.5" y="557" width="1.2" height="21" fill="#3e3c3c" />
<rect x="246.5" y="557" width="1.2" height="21" fill="#3e3c3c" />
<rect x="249.5" y="557" width="1.2" height="21" fill="#3e3c3c" />
<rect x="252.5" y="557" width="1.2" height="21" fill="#3e3c3c" />
<rect x="255.5" y="557" width="1.2" height="21" fill="#3e3c3c" />
<rect x="258.5" y="557" width="1.2" height="21" fill="#3e3c3c" />
<rect x="261.5" y="557" width="1.2" height="21" fill="#3e3c3c" />
<rect x="264.5" y="557" width="1.2" height="21" fill="#3e3c3c" />
<rect x="267.5" y="557" width="1.2" height="21" fill="#3e3c3c" />
<rect x="270.5" y="557" width="1.2" height="21" fill="#3e3c3c" />
<rect x="273.5" y="557" width="1.2" height="21" fill="#3e3c3c" />
<rect x="276.5" y="557" width="1.2" height="21" fill="#3e3c3c" />
<rect x="279.5" y="557" width="1.2" height="21" fill="#3e3c3c" />
<rect x="282.5" y="557" width="1.2" height="21" fill="#3e3c3c" />
<rect x="285.5" y="557" width="1.2" height="21" fill="#3e3c3c" />
<rect x="289" y="556" width="14" height="22" fill="#1e1d1c" />
<rect x="290" y="557" width="12" height="20" fill="#3c3b3a" />
<rect x="290" y="576" width="12" height="1" fill="#575553" />
<path d="M294.1 565.1 L297.9 568.9 M297.9 565.1 L294.1 568.9" stroke="#e0e0e0" stroke-width="1.15"/>
<rect x="22" y="556" width="23" height="23" fill="#2c2a29" />
<rect x="23" y="557" width="21" height="20" fill="#8e8e8e" />
<rect x="23" y="557" width="21" height="1" fill="#b5b5b5" />
<rect x="23" y="576" width="21" height="1" fill="#6c6c6c" />
<path d="M30 564 L37 567.6 L30 571.2 Z" fill="#1c1c1c" stroke="#1c1c1c" stroke-width="0.6" stroke-linejoin="round"/>
<text x="69.60" y="571" font-size="9.6" font-weight="normal" fill="#e0e0e0" textLength="27.72" lengthAdjust="spacingAndGlyphs" >Nauvis</text>
<path d="M105.3 562V571 M102.8 568.5L105.3 571.2L107.8 568.5" fill="none" stroke="#e0e0e0" stroke-width="1.3"/>
<rect x="307" y="101" width="10" height="483" fill="#151515" />
<rect x="308" y="101" width="8" height="483" fill="#2a2828" />
<rect x="316" y="101" width="1" height="483" fill="#101010" />
<rect x="309" y="101" width="7" height="428" fill="#959595" />
<rect x="309" y="101" width="7" height="1" fill="#c8c8c8" />
<rect x="309" y="104" width="7" height="1" fill="#7a7a7a" />
<rect x="309" y="107" width="7" height="1" fill="#7a7a7a" />
<rect x="309" y="110" width="7" height="1" fill="#7a7a7a" />
<rect x="309" y="113" width="7" height="1" fill="#7a7a7a" />
<rect x="309" y="116" width="7" height="1" fill="#7a7a7a" />
<rect x="309" y="119" width="7" height="1" fill="#7a7a7a" />
<rect x="309" y="122" width="7" height="1" fill="#7a7a7a" />
<rect x="309" y="125" width="7" height="1" fill="#7a7a7a" />
<rect x="309" y="128" width="7" height="1" fill="#7a7a7a" />
<rect x="309" y="131" width="7" height="1" fill="#7a7a7a" />
<rect x="309" y="134" width="7" height="1" fill="#7a7a7a" />
<rect x="309" y="137" width="7" height="1" fill="#7a7a7a" />
<rect x="309" y="140" width="7" height="1" fill="#7a7a7a" />
<rect x="309" y="143" width="7" height="1" fill="#7a7a7a" />
<rect x="309" y="146" width="7" height="1" fill="#7a7a7a" />
<rect x="309" y="149" width="7" height="1" fill="#7a7a7a" />
<rect x="309" y="152" width="7" height="1" fill="#7a7a7a" />
<rect x="309" y="155" width="7" height="1" fill="#7a7a7a" />
<rect x="309" y="158" width="7" height="1" fill="#7a7a7a" />
<rect x="309" y="161" width="7" height="1" fill="#7a7a7a" />
<rect x="309" y="164" width="7" height="1" fill="#7a7a7a" />
<rect x="309" y="167" width="7" height="1" fill="#7a7a7a" />
<rect x="309" y="170" width="7" height="1" fill="#7a7a7a" />
<rect x="309" y="173" width="7" height="1" fill="#7a7a7a" />
<rect x="309" y="176" width="7" height="1" fill="#7a7a7a" />
<rect x="309" y="179" width="7" height="1" fill="#7a7a7a" />
<rect x="309" y="182" width="7" height="1" fill="#7a7a7a" />
<rect x="309" y="185" width="7" height="1" fill="#7a7a7a" />
<rect x="309" y="188" width="7" height="1" fill="#7a7a7a" />
<rect x="309" y="191" width="7" height="1" fill="#7a7a7a" />
<rect x="309" y="194" width="7" height="1" fill="#7a7a7a" />
<rect x="309" y="197" width="7" height="1" fill="#7a7a7a" />
<rect x="309" y="200" width="7" height="1" fill="#7a7a7a" />
<rect x="309" y="203" width="7" height="1" fill="#7a7a7a" />
<rect x="309" y="206" width="7" height="1" fill="#7a7a7a" />
<rect x="309" y="209" width="7" height="1" fill="#7a7a7a" />
<rect x="309" y="212" width="7" height="1" fill="#7a7a7a" />
<rect x="309" y="215" width="7" height="1" fill="#7a7a7a" />
<rect x="309" y="218" width="7" height="1" fill="#7a7a7a" />
<rect x="309" y="221" width="7" height="1" fill="#7a7a7a" />
<rect x="309" y="224" width="7" height="1" fill="#7a7a7a" />
<rect x="309" y="227" width="7" height="1" fill="#7a7a7a" />
<rect x="309" y="230" width="7" height="1" fill="#7a7a7a" />
<rect x="309" y="233" width="7" height="1" fill="#7a7a7a" />
<rect x="309" y="236" width="7" height="1" fill="#7a7a7a" />
<rect x="309" y="239" width="7" height="1" fill="#7a7a7a" />
<rect x="309" y="242" width="7" height="1" fill="#7a7a7a" />
<rect x="309" y="245" width="7" height="1" fill="#7a7a7a" />
<rect x="309" y="248" width="7" height="1" fill="#7a7a7a" />
<rect x="309" y="251" width="7" height="1" fill="#7a7a7a" />
<rect x="309" y="254" width="7" height="1" fill="#7a7a7a" />
<rect x="309" y="257" width="7" height="1" fill="#7a7a7a" />
<rect x="309" y="260" width="7" height="1" fill="#7a7a7a" />
<rect x="309" y="263" width="7" height="1" fill="#7a7a7a" />
<rect x="309" y="266" width="7" height="1" fill="#7a7a7a" />
<rect x="309" y="269" width="7" height="1" fill="#7a7a7a" />
<rect x="309" y="272" width="7" height="1" fill="#7a7a7a" />
<rect x="309" y="275" width="7" height="1" fill="#7a7a7a" />
<rect x="309" y="278" width="7" height="1" fill="#7a7a7a" />
<rect x="309" y="281" width="7" height="1" fill="#7a7a7a" />
<rect x="309" y="284" width="7" height="1" fill="#7a7a7a" />
<rect x="309" y="287" width="7" height="1" fill="#7a7a7a" />
<rect x="309" y="290" width="7" height="1" fill="#7a7a7a" />
<rect x="309" y="293" width="7" height="1" fill="#7a7a7a" />
<rect x="309" y="296" width="7" height="1" fill="#7a7a7a" />
<rect x="309" y="299" width="7" height="1" fill="#7a7a7a" />
<rect x="309" y="302" width="7" height="1" fill="#7a7a7a" />
<rect x="309" y="305" width="7" height="1" fill="#7a7a7a" />
<rect x="309" y="308" width="7" height="1" fill="#7a7a7a" />
<rect x="309" y="311" width="7" height="1" fill="#7a7a7a" />
<rect x="309" y="314" width="7" height="1" fill="#7a7a7a" />
<rect x="309" y="317" width="7" height="1" fill="#7a7a7a" />
<rect x="309" y="320" width="7" height="1" fill="#7a7a7a" />
<rect x="309" y="323" width="7" height="1" fill="#7a7a7a" />
<rect x="309" y="326" width="7" height="1" fill="#7a7a7a" />
<rect x="309" y="329" width="7" height="1" fill="#7a7a7a" />
<rect x="309" y="332" width="7" height="1" fill="#7a7a7a" />
<rect x="309" y="335" width="7" height="1" fill="#7a7a7a" />
<rect x="309" y="338" width="7" height="1" fill="#7a7a7a" />
<rect x="309" y="341" width="7" height="1" fill="#7a7a7a" />
<rect x="309" y="344" width="7" height="1" fill="#7a7a7a" />
<rect x="309" y="347" width="7" height="1" fill="#7a7a7a" />
<rect x="309" y="350" width="7" height="1" fill="#7a7a7a" />
<rect x="309" y="353" width="7" height="1" fill="#7a7a7a" />
<rect x="309" y="356" width="7" height="1" fill="#7a7a7a" />
<rect x="309" y="359" width="7" height="1" fill="#7a7a7a" />
<rect x="309" y="362" width="7" height="1" fill="#7a7a7a" />
<rect x="309" y="365" width="7" height="1" fill="#7a7a7a" />
<rect x="309" y="368" width="7" height="1" fill="#7a7a7a" />
<rect x="309" y="371" width="7" height="1" fill="#7a7a7a" />
<rect x="309" y="374" width="7" height="1" fill="#7a7a7a" />
<rect x="309" y="377" width="7" height="1" fill="#7a7a7a" />
<rect x="309" y="380" width="7" height="1" fill="#7a7a7a" />
<rect x="309" y="383" width="7" height="1" fill="#7a7a7a" />
<rect x="309" y="386" width="7" height="1" fill="#7a7a7a" />
<rect x="309" y="389" width="7" height="1" fill="#7a7a7a" />
<rect x="309" y="392" width="7" height="1" fill="#7a7a7a" />
<rect x="309" y="395" width="7" height="1" fill="#7a7a7a" />
<rect x="309" y="398" width="7" height="1" fill="#7a7a7a" />
<rect x="309" y="401" width="7" height="1" fill="#7a7a7a" />
<rect x="309" y="404" width="7" height="1" fill="#7a7a7a" />
<rect x="309" y="407" width="7" height="1" fill="#7a7a7a" />
<rect x="309" y="410" width="7" height="1" fill="#7a7a7a" />
<rect x="309" y="413" width="7" height="1" fill="#7a7a7a" />
<rect x="309" y="416" width="7" height="1" fill="#7a7a7a" />
<rect x="309" y="419" width="7" height="1" fill="#7a7a7a" />
<rect x="309" y="422" width="7" height="1" fill="#7a7a7a" />
<rect x="309" y="425" width="7" height="1" fill="#7a7a7a" />
<rect x="309" y="428" width="7" height="1" fill="#7a7a7a" />
<rect x="309" y="431" width="7" height="1" fill="#7a7a7a" />
<rect x="309" y="434" width="7" height="1" fill="#7a7a7a" />
<rect x="309" y="437" width="7" height="1" fill="#7a7a7a" />
<rect x="309" y="440" width="7" height="1" fill="#7a7a7a" />
<rect x="309" y="443" width="7" height="1" fill="#7a7a7a" />
<rect x="309" y="446" width="7" height="1" fill="#7a7a7a" />
<rect x="309" y="449" width="7" height="1" fill="#7a7a7a" />
<rect x="309" y="452" width="7" height="1" fill="#7a7a7a" />
<rect x="309" y="455" width="7" height="1" fill="#7a7a7a" />
<rect x="309" y="458" width="7" height="1" fill="#7a7a7a" />
<rect x="309" y="461" width="7" height="1" fill="#7a7a7a" />
<rect x="309" y="464" width="7" height="1" fill="#7a7a7a" />
<rect x="309" y="467" width="7" height="1" fill="#7a7a7a" />
<rect x="309" y="470" width="7" height="1" fill="#7a7a7a" />
<rect x="309" y="473" width="7" height="1" fill="#7a7a7a" />
<rect x="309" y="476" width="7" height="1" fill="#7a7a7a" />
<rect x="309" y="479" width="7" height="1" fill="#7a7a7a" />
<rect x="309" y="482" width="7" height="1" fill="#7a7a7a" />
<rect x="309" y="485" width="7" height="1" fill="#7a7a7a" />
<rect x="309" y="488" width="7" height="1" fill="#7a7a7a" />
<rect x="309" y="491" width="7" height="1" fill="#7a7a7a" />
<rect x="309" y="494" width="7" height="1" fill="#7a7a7a" />
<rect x="309" y="497" width="7" height="1" fill="#7a7a7a" />
<rect x="309" y="500" width="7" height="1" fill="#7a7a7a" />
<rect x="309" y="503" width="7" height="1" fill="#7a7a7a" />
<rect x="309" y="506" width="7" height="1" fill="#7a7a7a" />
<rect x="309" y="509" width="7" height="1" fill="#7a7a7a" />
<rect x="309" y="512" width="7" height="1" fill="#7a7a7a" />
<rect x="309" y="515" width="7" height="1" fill="#7a7a7a" />
<rect x="309" y="518" width="7" height="1" fill="#7a7a7a" />
<rect x="309" y="521" width="7" height="1" fill="#7a7a7a" />
<rect x="309" y="524" width="7" height="1" fill="#7a7a7a" />
<rect x="309" y="528" width="7" height="1" fill="#5a5a5a" />
<rect x="335" y="29" width="563" height="564" fill="#000000" />
<rect x="335" y="29" width="563" height="27" fill="#252423" />
<rect x="335" y="29" width="563" height="1" fill="#0d0c0c" />
<rect x="335" y="30" width="563" height="1" fill="#1a1919" />
<text x="338.00" y="46" font-size="10.4" font-weight="normal" fill="#7cc6f2" textLength="79.64" lengthAdjust="spacingAndGlyphs" >Control + Left-click</text>
<text x="420.00" y="46" font-size="10.4" font-weight="normal" fill="#e0e0e0" textLength="109.61" lengthAdjust="spacingAndGlyphs" >to insert a temporary stop.</text>
<text x="532.20" y="46" font-size="10.4" font-weight="normal" fill="#7cc6f2" textLength="67.56" lengthAdjust="spacingAndGlyphs" >Shift + Left-click</text>
<text x="602.70" y="46" font-size="10.4" font-weight="normal" fill="#e0e0e0" textLength="166.22" lengthAdjust="spacingAndGlyphs" >to add the selected stop to the schedule.</text>
<rect x="849.5" y="32" width="22" height="21.3" fill="#2a1f12" />
<rect x="850.5" y="33" width="20" height="19.3" fill="#f2c068" />
<rect x="850.5" y="51.3" width="20" height="1" fill="#c09040" />
<rect x="825.5" y="32" width="22" height="21.3" fill="#2a1f12" />
<rect x="826.5" y="33" width="20" height="19.3" fill="#f2c068" />
<rect x="826.5" y="51.3" width="20" height="1" fill="#c09040" />
<rect x="873" y="31" width="23" height="23" fill="#1d1c1c" />
<rect x="874" y="32" width="21" height="21" fill="#8e8e8e" />
<rect x="874" y="32" width="21" height="1" fill="#b5b5b5" />
<rect x="874" y="52" width="21" height="1" fill="#6c6c6c" />
<rect x="335" y="56" width="563" height="537" fill="#000000" />
<rect x="464" y="56" width="434" height="406" fill="#0a0e0b" />
<rect x="335" y="593" width="563" height="1" fill="#55514f" />
<rect x="897" y="213" width="1" height="9" fill="#3a3a3a" />
<rect x="334" y="29" width="1" height="564" fill="#2a2625" />
<rect x="335" y="29" width="1" height="564" fill="#0a0a0a" />
<rect x="898" y="29" width="1" height="564" fill="#26221f" />
<path d="M50.5 208.5H55 M52.7 206.2V210.8" stroke="#e58e8e" stroke-width="1.3"/>
<use href="#circ" x="56.2" y="201.9" width="13.9" height="11"/>
<rect x="25.5" y="229" width="16.0" height="17" fill="#212020" />
<rect x="26.0" y="229" width="15.0" height="1" fill="#322e2d" />
<rect x="26.0" y="245" width="15.0" height="1" fill="#161515" />
<rect x="52.5" y="229" width="28.0" height="17" fill="#212020" />
<rect x="53.0" y="229" width="27.0" height="1" fill="#322e2d" />
<rect x="53.0" y="245" width="27.0" height="1" fill="#161515" />
<rect x="89" y="223" width="216" height="1" fill="#1a1919" />
<rect x="89" y="224" width="216" height="26" fill="#2e2a29" />
<rect x="90" y="225" width="214" height="24" fill="#414040" />
<rect x="89" y="224" width="216" height="1" fill="#5b5654" />
<rect x="241" y="226" width="47" height="23" fill="#2f2a29" />
<rect x="242" y="227" width="45" height="21" fill="#2a2828" />
<rect x="243.5" y="227" width="1.2" height="21" fill="#3e3c3c" />
<rect x="246.5" y="227" width="1.2" height="21" fill="#3e3c3c" />
<rect x="249.5" y="227" width="1.2" height="21" fill="#3e3c3c" />
<rect x="252.5" y="227" width="1.2" height="21" fill="#3e3c3c" />
<rect x="255.5" y="227" width="1.2" height="21" fill="#3e3c3c" />
<rect x="258.5" y="227" width="1.2" height="21" fill="#3e3c3c" />
<rect x="261.5" y="227" width="1.2" height="21" fill="#3e3c3c" />
<rect x="264.5" y="227" width="1.2" height="21" fill="#3e3c3c" />
<rect x="267.5" y="227" width="1.2" height="21" fill="#3e3c3c" />
<rect x="270.5" y="227" width="1.2" height="21" fill="#3e3c3c" />
<rect x="273.5" y="227" width="1.2" height="21" fill="#3e3c3c" />
<rect x="276.5" y="227" width="1.2" height="21" fill="#3e3c3c" />
<rect x="279.5" y="227" width="1.2" height="21" fill="#3e3c3c" />
<rect x="282.5" y="227" width="1.2" height="21" fill="#3e3c3c" />
<rect x="285.5" y="227" width="1.2" height="21" fill="#3e3c3c" />
<rect x="289" y="226" width="14" height="22" fill="#1e1d1c" />
<rect x="290" y="227" width="12" height="20" fill="#3c3b3a" />
<rect x="290" y="246" width="12" height="1" fill="#575553" />
<path d="M294.1 235.1 L297.9 238.9 M297.9 235.1 L294.1 238.9" stroke="#e0e0e0" stroke-width="1.15"/>
<text x="95.00" y="241" font-size="9.6" font-weight="normal" fill="#e8e8e8" textLength="22.59" lengthAdjust="spacingAndGlyphs" >Cargo</text>
<rect x="151" y="227" width="21" height="21" fill="#1e1d1c" />
<rect x="152" y="228" width="19" height="19" fill="#2f2e2d" />
<rect x="152" y="228" width="19" height="1" fill="#3e3c3b" />
<use href="#circ" x="152.8" y="230.5" width="17" height="14"/>
<rect x="175" y="227" width="37" height="21" fill="#8e8e8e" />
<rect x="175" y="227" width="37" height="1" fill="#b5b5b5" />
<rect x="175" y="247" width="37" height="1" fill="#6c6c6c" />
<path d="M181.7 236L185.7 237.6L181.7 239.1 M181.7 240.3H185.9" fill="none" stroke="#1a1a1a" stroke-width="1.15"/>
<path d="M199 236.2H206L202.5 239.8Z" fill="#1a1a1a"/>
<rect x="215" y="227" width="21" height="21" fill="#1e1d1c" />
<rect x="216" y="228" width="19" height="19" fill="#2f2e2d" />
<text x="216.80" y="241" font-size="9.3" font-weight="bold" fill="#ffffff" textLength="16.47" lengthAdjust="spacingAndGlyphs" stroke="#000" stroke-width="1.6" paint-order="stroke" stroke-linejoin="round">2.0k</text>
<use href="#planet" x="50" y="320.5" width="14.5" height="14.5"/>
<use href="#planet" x="50" y="560.5" width="14.5" height="14.5"/>
<rect x="50.5" y="477.8" width="3.5" height="1.3" fill="#e0e0e0" />
<use href="#circ" x="54.5" y="472" width="13.5" height="11"/>
<rect x="89" y="494" width="93" height="26" fill="#11c55a" />
<text x="95.30" y="511" font-size="9.6" font-weight="normal" fill="#e8e8e8" textLength="92.39" lengthAdjust="spacingAndGlyphs" >Empty cargo inventory</text>
<clipPath id="pclip"><rect x="89" y="494" width="93" height="26"/></clipPath>
<text x="95.30" y="511" font-size="9.6" font-weight="normal" fill="#06180c" textLength="92.39" lengthAdjust="spacingAndGlyphs" stroke="#06180c" stroke-width="0.3" clip-path="url(#pclip)">Empty cargo inventory</text>
<circle cx="832.6" cy="46.4" r="2.1" fill="none" stroke="#1a1a1a" stroke-width="1.5"/>
<text x="835.3" y="45.6" font-size="6" font-weight="bold" fill="#1a1a1a" textLength="10" lengthAdjust="spacingAndGlyphs" transform="rotate(-45 835.3 45.6)">abc</text>
<circle cx="860.5" cy="42.5" r="6.2" fill="none" stroke="#1a1a1a" stroke-width="1.6" stroke-dasharray="7.2 2.54" stroke-dashoffset="8.47"/>
<circle cx="860.5" cy="36.3" r="0.9" fill="#1a1a1a"/>
<circle cx="860.5" cy="48.7" r="0.9" fill="#1a1a1a"/>
<circle cx="854.3" cy="42.5" r="0.9" fill="#1a1a1a"/>
<circle cx="866.7" cy="42.5" r="0.9" fill="#1a1a1a"/>
<path d="M860.5 39L863.6 45H857.4Z" fill="#1a1a1a"/><rect x="860" y="42.3" width="1" height="1.6" fill="#c09040"/>
<path d="M878.4 36.4L882.4 40.4L886.6 36.6L890.6 39.2V47.6L886.8 44.4L882.4 48.6L878.4 45.8Z" fill="none" stroke="#1a1a1a" stroke-width="1.3" stroke-linejoin="round"/><path d="M882.4 40.4V48.6M886.7 36.6V44.4" stroke="#1a1a1a" stroke-width="1.1"/>
<rect x="38" y="239" width="48" height="27" fill="#3a3230" />
<rect x="39" y="240" width="46" height="25" fill="#221f1e" />
<rect x="41" y="242" width="42" height="20" fill="#8e8e8e" />
<rect x="41" y="242" width="42" height="1" fill="#b5b5b5" />
<rect x="41" y="261" width="42" height="1" fill="#6c6c6c" />
<text x="52.00" y="255" font-size="9.2" font-weight="normal" fill="#161616" textLength="19.21" lengthAdjust="spacingAndGlyphs" stroke="#161616" stroke-width="0.45">AND</text>
<g fill="none" stroke="#8a8a8a" stroke-width="2.4" stroke-linejoin="round"><path d="M626 268.5H670L697 296L705.5 305V322L695 334.5H606L595.5 321V298L600 291L621 270Z"/><path d="M598 293H693"/><path d="M638 325.5H696L704 318"/><path d="M599 318L603 326" /></g>
<rect x="626" y="269" width="36" height="37" fill="#005a94" />
<circle cx="599" cy="294" r="1.8" fill="#10e010"/>
<circle cx="610" cy="294" r="1.8" fill="#10e010"/>
<circle cx="626" cy="294" r="1.8" fill="#10e010"/>
<circle cx="661" cy="294" r="1.8" fill="#10e010"/>
<circle cx="689" cy="290" r="1.8" fill="#10e010"/>
<circle cx="688" cy="294" r="1.8" fill="#10e010"/>
<circle cx="599" cy="317" r="1.8" fill="#10e010"/>
<circle cx="599" cy="326" r="1.8" fill="#10e010"/>
<circle cx="700" cy="326" r="1.8" fill="#10e010"/>
<circle cx="700" cy="317" r="1.8" fill="#ff1010"/>
<rect x="680" y="321" width="9" height="18" fill="#6e6e6e" />
<rect x="612" y="336" width="33" height="5" fill="#5a5a5a" />
<rect x="637" y="321" width="8" height="18" fill="#6e6e6e" />
<path d="M601 325.5L616 316.5H637V335H616Z" fill="#ff0a0a"/>
<path d="M607 325.5L618 319.5H633V332H618Z" fill="#f2c040"/>
<circle cx="639.5" cy="310" r="5" fill="#f08a8a"/><circle cx="636" cy="310.5" r="2" fill="#f8d8a0" opacity="0.8"/>
<g transform="rotate(-30 630 310)"><use href="#circ" x="623" y="305" width="13" height="11"/></g>
<path d="M700 171H711V172H717V174H722V176H727V178H730V189H727V191H724V194H718V197H714V200H700V197H692V194H687V191H684V189H683V183H687V179H689V175H692V173H700Z" fill="#5b5b5b"/>
<rect x="700" y="199" width="3" height="6" fill="#3a3a3a" />
<rect x="708.5" y="199" width="2.5" height="6" fill="#3a3a3a" />
<rect x="717" y="196" width="2.5" height="9" fill="#3a3a3a" />
<path d="M695 206H708V204H714V206H734V204H739V198H741V195H743V192H746V190H758V192H761V195H764V198H769V201H772V206H774V210H775V240H771V250H768V261H765V266.5H748.5V264H737V262H726V258H719V266H697V253H694V252H692.7V250H690V248H687V245H684V242H682V238H681V221H682V215H686V212.7H689V209.3H695Z" fill="#5b5b5b"/>
<path d="M692 252H700V266H697V262H694Z" fill="#474747"/>
<path d="M717 256H726V258H724V262H721V266H718Z" fill="#474747"/>
<rect x="726" y="258" width="10" height="4" fill="#474747" />
<rect x="700.5" y="254.5" width="16.5" height="12" fill="#0a0e0b" />
<rect x="704.7" y="254.3" width="2" height="3" fill="#8a8a8a" />
<rect x="710" y="254.3" width="1.5" height="3" fill="#8a8a8a" />
<rect x="703.5" y="257.5" width="2" height="3" fill="#8a8a8a" />
<rect x="711" y="257.5" width="2" height="3" fill="#8a8a8a" />
<rect x="697.3" y="257.7" width="2" height="8.6" fill="#8a8a8a" />
<rect x="718.7" y="257.7" width="1.8" height="8.6" fill="#8a8a8a" />
<rect x="697.6" y="260" width="1.5" height="3" fill="#1064a0" />
<rect x="719" y="260" width="1.5" height="3" fill="#1064a0" />
<rect x="698" y="255" width="2" height="2" fill="#1064a0" />
<rect x="717" y="255" width="2" height="2" fill="#1064a0" />
<rect x="734" y="173" width="5" height="4" fill="#707070" />
<rect x="768" y="173" width="5" height="4" fill="#707070" />
<rect x="734" y="180.2" width="5" height="4" fill="#707070" />
<rect x="768" y="180.2" width="5" height="4" fill="#707070" />
<rect x="739.3" y="171" width="11.6" height="6" fill="#1c2125" />
<rect x="756" y="171" width="11.8" height="6" fill="#1c2125" />
<rect x="739.3" y="179.7" width="11.6" height="6" fill="#1c2125" />
<rect x="756" y="179.7" width="11.8" height="6" fill="#1c2125" />
<rect x="752" y="173.3" width="2.75" height="15.5" fill="#4a4a4a" />
<rect x="752" y="173.3" width="2.75" height="1.6" fill="#8a8a8a" />
<rect x="752" y="181" width="2.75" height="2.5" fill="#8a8a8a" />
<rect x="737" y="173" width="2" height="1" fill="#1a80c0" />
<rect x="769.7" y="173" width="1.5" height="1" fill="#1a80c0" />
<rect x="749" y="192" width="3" height="3" fill="#dcf6fa" />
<rect x="755" y="192" width="3" height="3" fill="#dcf6fa" />
<rect x="746" y="195" width="3" height="3" fill="#dcf6fa" />
<rect x="752" y="195" width="3" height="3" fill="#dcf6fa" />
<rect x="758" y="195" width="3" height="3" fill="#dcf6fa" />
<rect x="743" y="198" width="3" height="3" fill="#dcf6fa" />
<rect x="749" y="198" width="3" height="3" fill="#dcf6fa" />
<rect x="755" y="198" width="3" height="3" fill="#dcf6fa" />
<rect x="761" y="198" width="3" height="3" fill="#dcf6fa" />
<rect x="746" y="201" width="3" height="3" fill="#dcf6fa" />
<rect x="752" y="201" width="3" height="3" fill="#dcf6fa" />
<rect x="758" y="201" width="3" height="3" fill="#dcf6fa" />
<rect x="743" y="204" width="3" height="3" fill="#dcf6fa" />
<rect x="749" y="204" width="3" height="3" fill="#dcf6fa" />
<rect x="761" y="204" width="3" height="3" fill="#dcf6fa" />
<rect x="758" y="207" width="3" height="3" fill="#dcf6fa" />
<rect x="764" y="207" width="3" height="3" fill="#dcf6fa" />
<rect x="755" y="210" width="3" height="3" fill="#dcf6fa" />
<rect x="761" y="210" width="3" height="3" fill="#dcf6fa" />
<rect x="749.5" y="195.5" width="2" height="2" fill="#4a4646" />
<rect x="755.5" y="195.5" width="2" height="2" fill="#4a4646" />
<rect x="746.5" y="198.5" width="2" height="2" fill="#4a4646" />
<rect x="752.5" y="198.5" width="2" height="2" fill="#4a4646" />
<rect x="758.5" y="198.5" width="2" height="2" fill="#4a4646" />
<rect x="743.5" y="201.5" width="2" height="2" fill="#4a4646" />
<rect x="749.5" y="201.5" width="2" height="2" fill="#4a4646" />
<rect x="755.5" y="201.5" width="2" height="2" fill="#4a4646" />
<rect x="761.5" y="201.5" width="2" height="2" fill="#4a4646" />
<rect x="746.5" y="204.5" width="2" height="2" fill="#4a4646" />
<rect x="752.5" y="204.5" width="2" height="2" fill="#4a4646" />
<rect x="758.5" y="204.5" width="2" height="2" fill="#4a4646" />
<rect x="749.5" y="207.5" width="2" height="2" fill="#4a4646" />
<rect x="755.5" y="207.5" width="2" height="2" fill="#4a4646" />
<rect x="761.5" y="207.5" width="2" height="2" fill="#4a4646" />
<rect x="758.5" y="210.5" width="2" height="2" fill="#4a4646" />
<rect x="717" y="183" width="8" height="4" fill="#1a78a8" />
<rect x="695" y="189" width="5" height="4" fill="#9cc0e0" />
<rect x="697" y="183" width="2" height="1" fill="#1a78a8" />
<rect x="717" y="178" width="1.5" height="1.5" fill="#1a78a8" />
<rect x="703" y="219" width="3" height="3.7" fill="#0e64a0" />
<rect x="708" y="218" width="5" height="4" fill="#0e64a0" />
<rect x="708" y="223" width="5" height="5" fill="#0e64a0" />
<rect x="714" y="222" width="5" height="4" fill="#0e64a0" />
<rect x="705" y="229" width="2" height="2" fill="#0e64a0" />
<rect x="704" y="232" width="3" height="2" fill="#0e64a0" />
<rect x="716" y="228" width="2" height="1" fill="#0e64a0" />
<rect x="716" y="219" width="1" height="2" fill="#0e64a0" />
<rect x="692" y="210" width="1" height="2" fill="#1064a0" />
<rect x="683" y="205.7" width="3" height="1" fill="#1064a0" />
<rect x="683" y="237" width="2" height="1" fill="#1064a0" />
<rect x="724" y="209" width="2" height="1" fill="#1064a0" />
<rect x="759" y="225" width="9" height="8.75" fill="#0e64a0" />
<rect x="739" y="210" width="4" height="3" fill="#0e64a0" />
<rect x="728" y="210" width="2" height="2" fill="#0e64a0" />
<rect x="728" y="213" width="2" height="2" fill="#0e64a0" />
<rect x="727" y="218" width="3" height="3" fill="#0e64a0" />
<rect x="737" y="216" width="3" height="2" fill="#9cc0e0" />
<rect x="733" y="219" width="2" height="6" fill="#9cc0e0" />
<rect x="733" y="223" width="4" height="2" fill="#9cc0e0" />
<rect x="732.7" y="251.7" width="4.5" height="5.3" fill="#0e64a0" />
<rect x="761.8" y="250.8" width="5.4" height="4.2" fill="#0e64a0" />
<rect x="720" y="241" width="2" height="1.3" fill="#0e64a0" />
<rect x="730" y="240" width="5" height="2" fill="#0e64a0" />
<rect x="735" y="233" width="2" height="1.5" fill="#0e64a0" />
<rect x="745" y="246" width="1.5" height="1.5" fill="#0e64a0" />
<rect x="761" y="231" width="2" height="1" fill="#0e64a0" />
<rect x="701" y="216" width="7" height="1.3" fill="#e2b24a" />
<rect x="701" y="216" width="1.3" height="4.7" fill="#e2b24a" />
<rect x="694" y="219.3" width="4" height="2" fill="#e2b24a" />
<rect x="700" y="219.3" width="2.7" height="2" fill="#e2b24a" />
<rect x="710" y="215.3" width="3" height="1.3" fill="#e2b24a" />
<rect x="713" y="216" width="3" height="1.3" fill="#e2b24a" />
<rect x="689" y="226" width="6.3" height="1.5" fill="#e2b24a" />
<rect x="689" y="226.7" width="2.3" height="8" fill="#e2b24a" />
<rect x="689" y="234" width="8" height="1.3" fill="#e2b24a" />
<rect x="695" y="234" width="2" height="3" fill="#e2b24a" />
<rect x="722.7" y="228.7" width="3.3" height="2" fill="#e2b24a" />
<rect x="695" y="235" width="1.7" height="2" fill="#e2b24a" />
<rect x="695" y="240" width="2" height="5" fill="#e2b24a" />
<rect x="696.7" y="243" width="1.6" height="6.7" fill="#e2b24a" />
<rect x="697" y="249" width="4" height="1.7" fill="#e2b24a" />
<rect x="704" y="249" width="10" height="1.7" fill="#e2b24a" />
<rect x="713" y="246" width="1.3" height="4.7" fill="#e2b24a" />
<rect x="717" y="240" width="5" height="1" fill="#e2b24a" />
<rect x="700" y="252" width="17" height="1.3" fill="#e2b24a" />
<rect x="700" y="252" width="1.3" height="5.7" fill="#e2b24a" />
<rect x="715.7" y="252" width="1.3" height="5.7" fill="#e2b24a" />
<rect x="726" y="228.75" width="10" height="2" fill="#e2b24a" />
<rect x="728" y="229" width="2" height="5" fill="#e2b24a" />
<rect x="741.4" y="233.75" width="4.6" height="1.25" fill="#e2b24a" />
<rect x="741.8" y="228" width="1.2" height="7" fill="#e2b24a" />
<rect x="727.7" y="237" width="2.3" height="4" fill="#e2b24a" />
<rect x="726" y="240" width="4" height="1" fill="#e2b24a" />
<rect x="756" y="225" width="2" height="3" fill="#e2b24a" />
<rect x="751.4" y="232" width="6.6" height="2.5" fill="#e2b24a" />
<rect x="751.8" y="234" width="1.7" height="6" fill="#e2b24a" />
<rect x="751.8" y="244.6" width="1.7" height="7.1" fill="#e2b24a" />
<rect x="751.8" y="250.4" width="4.2" height="1.6" fill="#e2b24a" />
<rect x="752.7" y="204" width="2.3" height="11.7" fill="#e2b24a" />
<rect x="755" y="201" width="3" height="2" fill="#e2b24a" />
<rect x="707" y="250.7" width="3" height="1.3" fill="#ffd21a" />
<rect x="752.7" y="234" width="2.3" height="2.7" fill="#ffd21a" />
<rect x="736" y="228.75" width="6.3" height="6.25" fill="#dcd498" />
<rect x="716" y="243" width="10" height="2.7" fill="#9a9a9a" />
<rect x="726" y="243" width="16.7" height="2.8" fill="#9a9a9a" />
<path d="M742 244.5L766.5 266" stroke="#9a9a9a" stroke-width="2.6"/>
<rect x="680" y="226.3" width="5" height="4.4" fill="#1e2428" />
<rect x="680" y="232" width="5" height="4.7" fill="#1e2428" />
<path d="M683.5 199.2L687.6 204.6H679.4Z" fill="#f4f4f4" stroke="#ff1a1a" stroke-width="1.4" stroke-linejoin="round"/>
<rect x="682" y="206.7" width="6" height="2" fill="#7a7a7a" />
<path d="M180.5 413.5L180.5 429L184.3 425.6L187 431L189.5 430L187.2 424.8L191.5 424.5Z" fill="#ffffff" stroke="#000" stroke-width="1.1" stroke-linejoin="round"/>
</svg></body></html>
